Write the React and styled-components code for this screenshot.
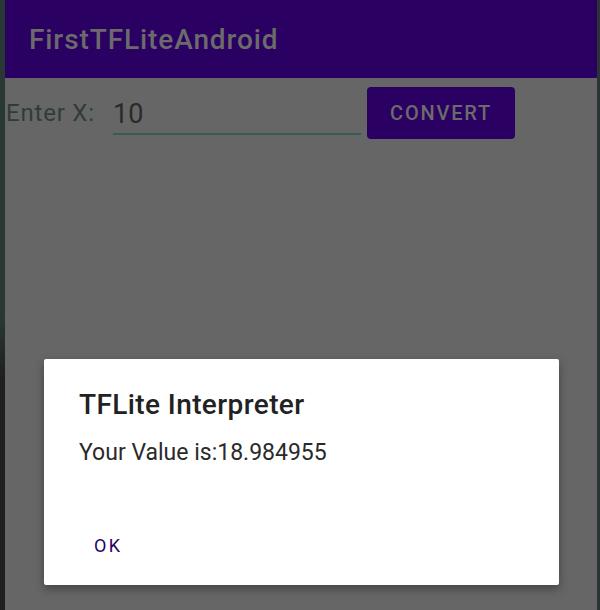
import React from 'react';
import styled, { createGlobalStyle } from 'styled-components';

const GlobalStyle = createGlobalStyle`
  html, body {
    margin: 0;
    padding: 0;
    background: #1f1f1f;
  }
  body {
    font-family: Roboto, "Noto Sans", sans-serif;
  }
`;

const Frame = styled.div`
  position: relative;
  display: flex;
  width: 600px;
  height: 610px;
  overflow: hidden;
`;

const EdgeStrip = styled.div`
  width: ${(p) => p.w}px;
  flex-shrink: 0;
  background: ${(p) => p.bg};
`;

const Screen = styled.div`
  flex: 1;
  display: flex;
  flex-direction: column;
  background: #666666;
`;

const AppBar = styled.div`
  height: 78px;
  display: flex;
  align-items: center;
  padding-left: 24px;
  background: #2a0063;
  color: #6b6b6b;
  font-size: 28px;
  font-weight: 500;
  letter-spacing: 0.9px;
`;

const FormRow = styled.div`
  display: flex;
  align-items: center;
  padding: 9px 0 0 1px;
`;

const Label = styled.span`
  font-size: 24px;
  letter-spacing: 0.8px;
  color: #2f3c3b;
  width: 107px;
`;

const InputField = styled.div`
  width: 248px;
  height: 42px;
  margin-top: 2px;
  display: flex;
  align-items: center;
  font-size: 27px;
  color: #2a2a2a;
  border-bottom: 2px solid #3b5a55;
  box-sizing: border-box;
  padding-top: 1px;
`;

const ConvertButton = styled.div`
  margin-left: 6px;
  width: 148px;
  height: 52px;
  border-radius: 4px;
  background: #2a0063;
  color: #6b6b6b;
  display: flex;
  align-items: center;
  justify-content: center;
  font-size: 20px;
  font-weight: 500;
  letter-spacing: 1.8px;
`;

const Dialog = styled.div`
  position: absolute;
  left: 44px;
  top: 359px;
  width: 515px;
  height: 226px;
  background: #ffffff;
  border-radius: 2px;
  box-shadow: 0 4px 10px rgba(0, 0, 0, 0.35);
  display: flex;
  flex-direction: column;
  padding: 29px 35px 0;
  box-sizing: border-box;
`;

const DialogTitle = styled.div`
  font-size: 28px;
  font-weight: 500;
  letter-spacing: 0.4px;
  color: #222222;
`;

const DialogBody = styled.div`
  margin-top: 18px;
  font-size: 23px;
  color: #2a2a2a;
`;

const DialogActions = styled.div`
  margin-top: auto;
  margin-bottom: 29px;
  padding-left: 15px;
`;

const OkButton = styled.span`
  font-size: 18px;
  letter-spacing: 2.4px;
  color: #2a0063;
`;

export default function App() {
  return (
    <>
      <GlobalStyle />
      <Frame>
        <EdgeStrip w={5} bg="linear-gradient(#2a3835 0%, #2a3835 52%, #1f1f1f 62%, #1f1f1f 100%)" />
        <Screen>
          <AppBar>FirstTFLiteAndroid</AppBar>
          <FormRow>
            <Label>Enter X:</Label>
            <InputField>10</InputField>
            <ConvertButton>CONVERT</ConvertButton>
          </FormRow>
        </Screen>
        <EdgeStrip w={3} bg="#2a3533" />
        <Dialog>
          <DialogTitle>TFLite Interpreter</DialogTitle>
          <DialogBody>Your Value is:18.984955</DialogBody>
          <DialogActions>
            <OkButton>OK</OkButton>
          </DialogActions>
        </Dialog>
      </Frame>
    </>
  );
}
